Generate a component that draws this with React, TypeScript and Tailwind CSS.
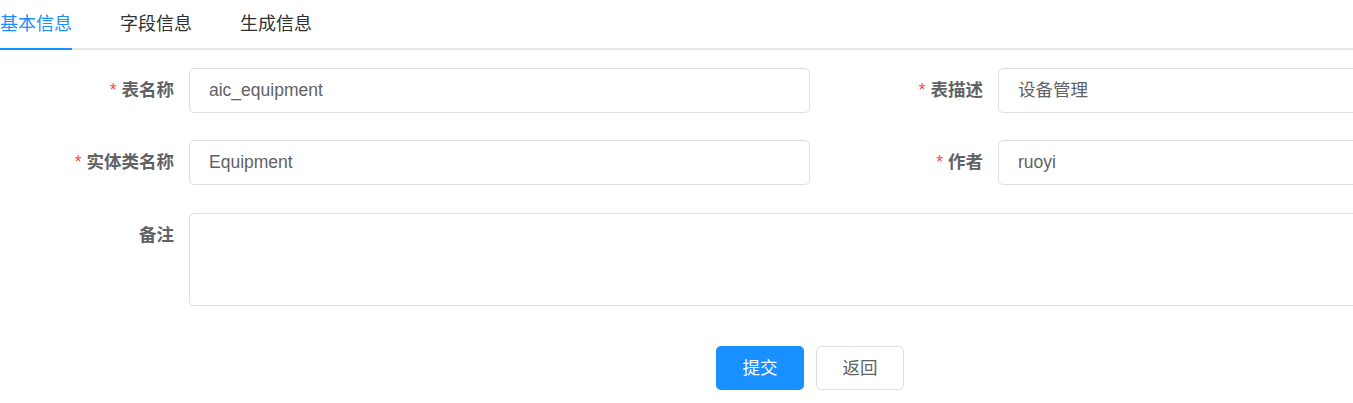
import React, { useState } from 'react';

const font = { fontFamily: '"Liberation Sans", "Noto Sans CJK SC", sans-serif' };

const tabs = ['基本信息', '字段信息', '生成信息'];

const Label: React.FC<{ text: string; required?: boolean; w?: string }> = ({ text, required, w }) => (
  <div className={(w ?? 'w-[189px]') + ' shrink-0 h-[45px] flex items-center justify-end pr-[15px] text-[17.5px] font-bold text-[#606266]'}>
    {required && <span className="text-[#ff4949] mr-[5px] font-normal">*</span>}
    {text}
  </div>
);

const Input: React.FC<{ value: string }> = ({ value }) => (
  <div className="w-[621px] shrink-0 h-[45px] border border-[#dcdfe6] rounded-[5px] flex items-center px-[19px] text-[17.5px] text-[#606266] bg-white">
    {value}
  </div>
);

export default function App() {
  const [active, setActive] = useState(0);
  const [remark] = useState('');

  return (
    <div className="w-[1353px] h-[403px] overflow-hidden bg-white" style={font}>
      {/* tabs */}
      <div className="w-[1700px] h-[50px] flex border-b-2 border-[#e4e7ed]">
        {tabs.map((t, i) => (
          <div
            key={t}
            onClick={() => setActive(i)}
            className={i === 0 ? 'pr-[24px] cursor-pointer' : 'px-[24px] cursor-pointer'}
          >
            <div
              className={
                i === active
                  ? 'h-[50px] leading-[48px] text-[18px] text-[#1890ff] border-b-2 border-[#1890ff]'
                  : 'h-[50px] leading-[48px] text-[18px] text-[#303133]'
              }
            >
              {t}
            </div>
          </div>
        ))}
      </div>

      {/* form */}
      <div className="w-[1700px] pt-[18px]">
        <div className="flex">
          <Label text="表名称" required />
          <Input value="aic_equipment" />
          <Label text="表描述" required w="w-[188px]" />
          <Input value="设备管理" />
        </div>
        <div className="flex mt-[27px]">
          <Label text="实体类名称" required />
          <Input value="Equipment" />
          <Label text="作者" required w="w-[188px]" />
          <Input value="ruoyi" />
        </div>
        <div className="flex mt-[28px]">
          <Label text="备注" />
          <div className="w-[1429px] h-[93px] border border-[#dcdfe6] rounded-[5px] px-[19px] py-[8px] text-[17.5px] text-[#606266]">
            {remark}
          </div>
        </div>
        <div className="flex gap-[12px] ml-[716px] mt-[40px]">
          <button className="w-[88px] h-[44px] rounded-[5px] bg-[#1890ff] text-white text-[17.5px]">提交</button>
          <button className="w-[88px] h-[44px] rounded-[5px] border border-[#dcdfe6] bg-white text-[#606266] text-[17.5px]">返回</button>
        </div>
      </div>
    </div>
  );
}
